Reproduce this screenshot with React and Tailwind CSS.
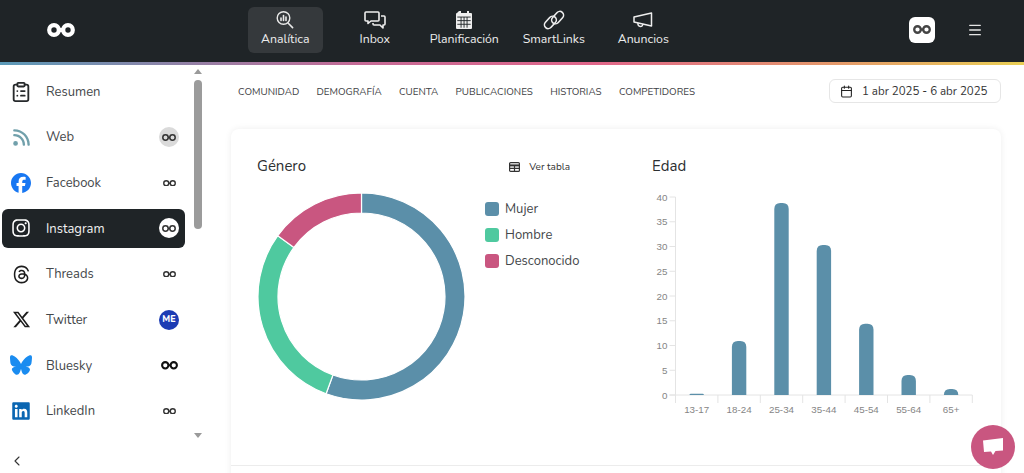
import React from "react";
import { FaFacebook, FaInstagram, FaThreads, FaXTwitter, FaBluesky, FaLinkedin, FaRss } from "react-icons/fa6";
import { ClipboardList, ChevronLeft, Menu, Calendar } from "lucide-react";

const Oo = ({ w = 14, color = "#222", sw = 3 }) => (
  <svg width={w} height={w / 2} viewBox="0 0 28 14" fill="none" stroke={color} strokeWidth={sw}>
    <circle cx="7" cy="7" r={6.9 - sw / 2} />
    <circle cx="21" cy="7" r={6.9 - sw / 2} />
    <path d="M12 7h4" />
  </svg>
);

const SearchBars = () => (
  <svg width="20" height="20" viewBox="0 0 20 20" fill="none" stroke="#e9e9e9" strokeWidth="1.4" strokeLinecap="round">
    <circle cx="8.5" cy="8" r="6.3" />
    <path d="M13 13l4.6 4.6" strokeWidth="1.6" />
    <path d="M6 10.4V8M8.5 10.4V5.5M11 10.4V7" strokeWidth="1.6" />
  </svg>
);
const InboxIcon = () => (
  <svg width="22" height="20" viewBox="0 0 22 20" fill="none" stroke="#eee" strokeWidth="1.6" strokeLinejoin="round">
    <path d="M2 2h12a1 1 0 0 1 1 1v7a1 1 0 0 1-1 1H7l-3 2.5V11H2a1 1 0 0 1-1-1V3a1 1 0 0 1 1-1z" />
    <path d="M17 6h3a1 1 0 0 1 1 1v7a1 1 0 0 1-1 1h-1v3l-3-3h-6a1 1 0 0 1-1-1v-1" />
  </svg>
);
const PlanIcon = () => (
  <svg width="16" height="18" viewBox="0 0 16 18" fill="#eee">
    <path d="M3 0h2v2h6V0h2v2h2a1 1 0 0 1 1 1v14a1 1 0 0 1-1 1H1a1 1 0 0 1-1-1V3a1 1 0 0 1 1-1z" />
    <g fill="#1f2427">
      <rect x="1.3" y="5.6" width="13.4" height="0.9" />
      <rect x="4.6" y="6" width="0.9" height="10.7" />
      <rect x="7.6" y="6" width="0.9" height="10.7" />
      <rect x="10.6" y="6" width="0.9" height="10.7" />
      <rect x="1.3" y="9.2" width="13.4" height="0.9" />
      <rect x="1.3" y="12.8" width="13.4" height="0.9" />
    </g>
  </svg>
);
const LinkIcon = () => (
  <svg width="22" height="20" viewBox="0 0 22 20" fill="none" stroke="#eee" strokeWidth="1.6">
    <rect x="-7" y="-3.8" width="14" height="7.6" rx="3.8" transform="translate(7.4 12.4) rotate(-48)" />
    <rect x="-7" y="-3.8" width="14" height="7.6" rx="3.8" transform="translate(14.6 7.6) rotate(-48)" />
  </svg>
);
const MegaIcon = () => (
  <svg width="20" height="16" viewBox="0 0 20 16" fill="none" stroke="#eee" strokeWidth="1.5" strokeLinejoin="round">
    <path d="M1 5l17.5-4v13L1 10z" />
    <path d="M5 11c-.4 2.2.8 3.4 2.4 3.4S10 13.2 9.7 12" />
  </svg>
);
const TableIcon = () => (
  <svg width="11" height="10" viewBox="0 0 11 10" fill="none" stroke="#333" strokeWidth="1.2">
    <rect x="0.6" y="0.6" width="9.8" height="8.8" rx="1" />
    <path d="M0.6 3.4h9.8" strokeWidth="2" />
    <path d="M5.5 3.4v6M0.6 6.4h9.8" />
  </svg>
);

const navItems = [
  { label: "Analítica", icon: <SearchBars />, active: true },
  { label: "Inbox", icon: <InboxIcon /> },
  { label: "Planificación", icon: <PlanIcon /> },
  { label: "SmartLinks", icon: <LinkIcon /> },
  { label: "Anuncios", icon: <MegaIcon /> },
];

const sideItems = [
  { label: "Resumen", icon: <ClipboardList size={22} color="#26292b" strokeWidth={2} /> },
  { label: "Web", icon: <FaRss size={19} color="#71a0ab" />, badge: <span className="flex h-5 w-5 items-center justify-center rounded-full bg-[#dadada]"><Oo w={14} color="#333" /></span> },
  { label: "Facebook", icon: <FaFacebook size={20} color="#1877f2" />, badge: <Oo w={13} color="#333" /> },
  { label: "Instagram", icon: <FaInstagram size={20} color="#fff" />, active: true, badge: <span className="flex h-5 w-5 items-center justify-center rounded-full bg-white"><Oo w={14} color="#333" /></span> },
  { label: "Threads", icon: <FaThreads size={19} color="#1d1d1d" />, badge: <Oo w={13} color="#333" /> },
  { label: "Twitter", icon: <FaXTwitter size={19} color="#1d1d1d" />, badge: <span className="flex h-5 w-5 items-center justify-center rounded-full bg-[#1c3cb4] text-[9px] font-extrabold text-white">ME</span> },
  { label: "Bluesky", icon: <FaBluesky size={22} color="#1a8cf0" />, badge: <Oo w={17} color="#111" sw={3.4} /> },
  { label: "LinkedIn", icon: <FaLinkedin size={20} color="#0a66b2" />, badge: <Oo w={13} color="#333" /> },
];

const tabs = ["COMUNIDAD", "DEMOGRAFÍA", "CUENTA", "PUBLICACIONES", "HISTORIAS", "COMPETIDORES"];

const polar = (a, r) => {
  const t = ((a - 90) * Math.PI) / 180;
  return [103.5 + r * Math.cos(t), 103.5 + r * Math.sin(t)];
};
const arc = (a0, a1) => {
  const R = 103.5, r = 83.5;
  const [x0, y0] = polar(a0, R), [x1, y1] = polar(a1, R), [x2, y2] = polar(a1, r), [x3, y3] = polar(a0, r);
  const large = a1 - a0 > 180 ? 1 : 0;
  return `M${x0} ${y0}A${R} ${R} 0 ${large} 1 ${x1} ${y1}L${x2} ${y2}A${r} ${r} 0 ${large} 0 ${x3} ${y3}Z`;
};

const Donut = () => (
  <svg width="207" height="207" viewBox="0 0 207 207">
    <path d={arc(0, 200)} fill="#5b8fa9" stroke="#fff" strokeWidth="1.2" />
    <path d={arc(200, 306)} fill="#4fc99f" stroke="#fff" strokeWidth="1.2" />
    <path d={arc(306, 360)} fill="#c95680" stroke="#fff" strokeWidth="1.2" />
  </svg>
);

const bars = [
  ["13-17", 393.7], ["18-24", 341], ["25-34", 203], ["35-44", 245],
  ["45-54", 323.7], ["55-64", 375], ["65+", 389],
];

const BarChart = () => {
  const ox = 652, oy = 186;
  const y0 = 395 - oy, x0 = 675.5 - ox, step = 42.4;
  return (
    <svg width="330" height="235" viewBox="0 0 330 235" fontFamily="'Liberation Sans', sans-serif" fontSize="9.8" fill="#858585">
      <path d={`M${x0} ${197 - oy}V${y0 + 8}M${x0 - 6} ${y0}H${x0 + step * 7}`} stroke="#e4e4e4" fill="none" />
      {[0, 5, 10, 15, 20, 25, 30, 35, 40].map((v) => {
        const y = y0 - v * 4.95;
        return (
          <g key={v}>
            <path d={`M${x0 - 6} ${y}H${x0}`} stroke="#e4e4e4" />
            <text x={x0 - 8} y={y + 3.5} textAnchor="end">{v}</text>
          </g>
        );
      })}
      {bars.map(([l, top], i) => {
        const cx = x0 + step * (i + 0.5);
        const h = 395 - top;
        const r = Math.min(6, h);
        return (
          <g key={l}>
            <path d={`M${x0 + step * (i + 1)} ${y0}V${y0 + 8}`} stroke="#e4e4e4" />
            <path
              d={`M${cx - 7.2} ${y0}V${y0 - h + r}Q${cx - 7.2} ${y0 - h} ${cx - 7.2 + r} ${y0 - h}H${cx + 7.2 - r}Q${cx + 7.2} ${y0 - h} ${cx + 7.2} ${y0 - h + r}V${y0}Z`}
              fill="#5b8fa9"
            />
            <text x={cx} y={y0 + 17.5} textAnchor="middle">{l}</text>
          </g>
        );
      })}
    </svg>
  );
};

export default function App() {
  return (
    <div className="relative flex h-[473px] w-[1024px] flex-col overflow-hidden bg-white font-['Nunito','Noto_Sans',sans-serif] text-[#3a3d40]">
      <header className="flex h-[62px] shrink-0 items-center bg-[#1f2427] pb-[3px]">
        <div className="flex w-[240px] shrink-0 pl-[47px]">
          <Oo w={28} color="#fff" sw={4.2} />
        </div>
        <nav className="flex pl-[0.5px]">
          {navItems.map((n) => (
            <div key={n.label} className="flex w-[89.5px] justify-center">
              <div className={`flex h-[46px] w-[75px] flex-col items-center justify-between rounded-md pb-[7px] pt-[3px] ${n.active ? "bg-[#35393c]" : ""}`}>
                <span className="flex h-[20px] items-center">{n.icon}</span>
                <span className="whitespace-nowrap text-[12.3px] leading-[14px] text-[#ececec]">{n.label}</span>
              </div>
            </div>
          ))}
        </nav>
        <div className="ml-auto flex items-center gap-[32px] pr-[41px]">
          <span className="flex h-[26px] w-[26px] items-center justify-center rounded-md bg-white">
            <Oo w={18} color="#444" sw={3.6} />
          </span>
          <Menu size={16} color="#e5e5e5" strokeWidth={1.9} />
        </div>
      </header>
      <div className="h-[3px] shrink-0 bg-[linear-gradient(90deg,#5b9ab8_0%,#c56a96_35%,#e0668a_58%,#e49a6a_82%,#e9cf55_100%)]" />

      <div className="flex min-h-0 flex-1">
        <aside className="flex w-[205px] shrink-0">
          <div className="flex w-[191px] shrink-0 flex-col pl-[2px] pr-[6px] pt-[7px]">
            {sideItems.map((s) => (
              <div key={s.label} className={`mb-[6.67px] flex h-[39px] shrink-0 items-center rounded-md ${s.active ? "bg-[#1f2427] text-[#f1f1f1]" : "text-[#44474a]"}`}>
                <span className="flex w-[38px] shrink-0 justify-center">{s.icon}</span>
                <span className="ml-[6px] pt-[2px] text-[13px]">{s.label}</span>
                <span className="ml-auto flex w-[32px] justify-center">{s.badge}</span>
              </div>
            ))}
            <div className="mt-[16px] flex pl-[7px]">
              <ChevronLeft size={16} color="#333" strokeWidth={1.6} />
            </div>
          </div>
          <div className="flex w-[14px] flex-col items-center pt-[4px]">
            <div className="h-0 w-0 border-x-[4px] border-b-[5px] border-x-transparent border-b-[#9a9a9a]" />
            <div className="mt-[6px] h-[149px] w-[8px] rounded-full bg-[#9b9b9b]" />
            <div className="mt-[204px] h-0 w-0 border-x-[4px] border-t-[5px] border-x-transparent border-t-[#9a9a9a]" />
          </div>
        </aside>

        <main className="min-w-0 flex-1 pl-[26px] pr-[23px] pt-[14px]">
          <div className="flex h-[24px] items-center pl-[7px]">
            <div className="flex gap-[17.3px] pt-[2px] text-[9.9px] text-[#3d4043]">
              {tabs.map((t) => <span key={t}>{t}</span>)}
            </div>
            <div className="ml-auto flex h-[24px] w-[172px] items-center gap-[9px] rounded-md border border-[#e6e6e6] pl-[10px] text-[11.5px] text-[#333]">
              <Calendar size={13} color="#222" strokeWidth={2} />
              <span className="whitespace-nowrap pt-[2px]">1 abr 2025 - 6 abr 2025</span>
            </div>
          </div>

          <section className="mt-[26px] rounded-lg bg-white shadow-[0_0_7px_rgba(0,0,0,0.07)]">
            <div className="flex h-[337px] border-b border-[#ececec] pl-[26px] pt-[28px]">
              <div className="w-[395px] shrink-0">
                <div className="flex w-[313px] items-center justify-between">
                  <h2 className="text-[15px] leading-[18px] text-[#2c2f31]">Género</h2>
                  <span className="flex items-center gap-[9px] pt-[2px] text-[10px] text-[#333]"><TableIcon />Ver tabla</span>
                </div>
                <div className="mt-[18px] flex pl-[1px]">
                  <Donut />
                  <ul className="ml-[20px] mt-[7px] flex flex-col gap-[8px] text-[13px] leading-[18px] text-[#44474a]">
                    {[["Mujer", "bg-[#5b8fa9]"], ["Hombre", "bg-[#4fc99f]"], ["Desconocido", "bg-[#c95680]"]].map(([l, c]) => (
                      <li key={l} className="flex items-center gap-[6px]">
                        <span className={`h-[14px] w-[14px] rounded-[3px] ${c}`} />
                        {l}
                      </li>
                    ))}
                  </ul>
                </div>
              </div>
              <div>
                <h2 className="text-[15px] leading-[18px] text-[#2c2f31]">Edad</h2>
                <div className="mt-[11px]"><BarChart /></div>
              </div>
            </div>
            <div className="h-[30px]" />
          </section>
        </main>
      </div>

      <button className="absolute bottom-[4px] right-[9px] flex h-[44px] w-[44px] items-center justify-center rounded-full bg-[#c95680]">
        <svg width="22" height="20" viewBox="0 0 22 20" fill="#fff">
          <path d="M1 3.5L21 1v12.5l-7.5.6L11 18l-2-3.5-7 .4z" />
        </svg>
      </button>
    </div>
  );
}
